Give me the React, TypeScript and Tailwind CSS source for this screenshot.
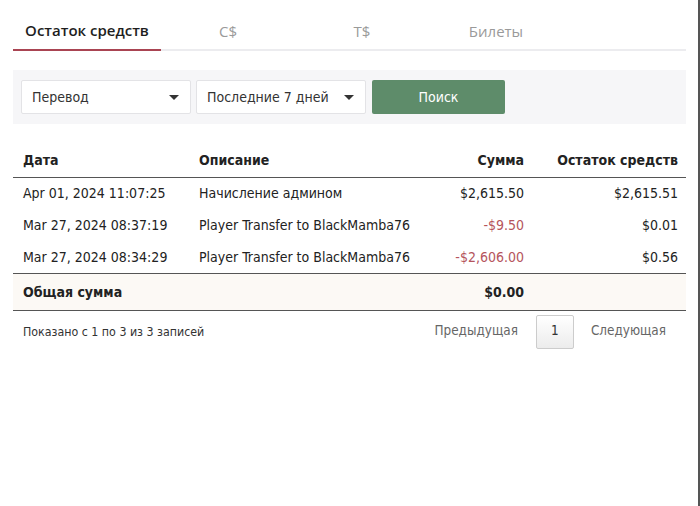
const rows = [
  { date: 'Apr 01, 2024 11:07:25', desc: 'Начисление админом', amount: '$2,615.50', neg: false, balance: '$2,615.51' },
  { date: 'Mar 27, 2024 08:37:19', desc: 'Player Transfer to BlackMamba76', amount: '-$9.50', neg: true, balance: '$0.01' },
  { date: 'Mar 27, 2024 08:34:29', desc: 'Player Transfer to BlackMamba76', amount: '-$2,606.00', neg: true, balance: '$0.56' },
]

const tabs = ['Остаток средств', 'C$', 'T$', 'Билеты']

function Caret() {
  return (
    <svg width="10" height="5" viewBox="0 0 10 5" className="fill-[#333]">
      <path d="M0 0 L10 0 L5 5 Z" />
    </svg>
  )
}

function Select({ label, width }: { label: string; width: string }) {
  return (
    <div className={`${width} h-[34px] bg-white border border-[#e3e3e6] rounded-[2px] flex items-center justify-between pl-[10px] pr-[11px] text-[14px] text-[#333]`}>
      <span>{label}</span>
      <Caret />
    </div>
  )
}

export default function App() {
  return (
    <div
      className="w-[700px] h-[506px] bg-white border-r-2 border-[#555] pl-[13px] pr-[12px] text-[#222]"
      style={{ fontFamily: '"DejaVu Sans Condensed", Tahoma, "Noto Sans", sans-serif' }}
    >
      {/* tabs */}
      <div className="flex h-[51px] border-b-2 border-[#ececef]" style={{ fontFamily: '"Open Sans", sans-serif' }}>
        {tabs.map((t, i) => (
          <div
            key={t}
            className={`flex items-center justify-center pt-[12px] text-[15px] -mb-[2px] ${
              i === 0
                ? 'w-[148px] font-semibold text-[#1e1e1e] border-b-2 border-[#a94452]'
                : 'w-[134px] text-[#9a9a9a]'
            }`}
          >
            {t}
          </div>
        ))}
      </div>

      {/* filters */}
      <div className="mt-[19px] bg-[#f6f6f8] h-[54px] flex items-center gap-[5px] px-[8px]">
        <Select label="Перевод" width="w-[170px]" />
        <Select label="Последние 7 дней" width="w-[170px]" />
        <button className="w-[133px] h-[34px] bg-[#5e8c6a] rounded-[2px] text-white text-[14px] ml-[1px]">
          Поиск
        </button>
      </div>

      {/* table */}
      <table className="w-full mt-[21px] text-[14px] border-collapse">
        <thead>
          <tr className="h-[32px] border-b border-[#555] text-[#222]">
            <th className="text-left font-bold pl-[10px] w-[186px]">Дата</th>
            <th className="text-left font-bold">Описание</th>
            <th className="text-right font-bold pr-[2px]">Сумма</th>
            <th className="text-right font-bold pr-[8px] w-[160px]">Остаток средств</th>
          </tr>
        </thead>
        <tbody>
          {rows.map((r, i) => (
            <tr key={i} className="h-[32px] text-[#222]">
              <td className="pl-[10px] pt-[1px]">{r.date}</td>
              <td className="pt-[1px]">{r.desc}</td>
              <td className={`text-right pr-[2px] pt-[1px] ${r.neg ? 'text-[#b5545c]' : ''}`}>{r.amount}</td>
              <td className="text-right pr-[8px] pt-[1px]">{r.balance}</td>
            </tr>
          ))}
          <tr className="h-[37px] bg-[#fcf9f5] border-y border-[#555] font-bold">
            <td className="pl-[10px] pt-[1px]" colSpan={2}>Общая сумма</td>
            <td className="text-right pr-[2px] pt-[1px]">$0.00</td>
            <td></td>
          </tr>
        </tbody>
      </table>

      {/* footer */}
      <div className="flex items-center justify-between mt-[4px] pl-[10px] pr-[20px]">
        <span className="text-[12.3px] text-[#333] pt-[1px]">Показано с 1 по 3 из 3 записей</span>
        <div className="flex items-center text-[13.4px] text-[#666]">
          <span>Предыдущая</span>
          <span className="ml-[18px] w-[38px] h-[34px] flex items-center justify-center border border-[#ccc] rounded-[2px] bg-gradient-to-b from-white to-[#ececec] text-[#333]">
            1
          </span>
          <span className="ml-[17px]">Следующая</span>
        </div>
      </div>
    </div>
  )
}
